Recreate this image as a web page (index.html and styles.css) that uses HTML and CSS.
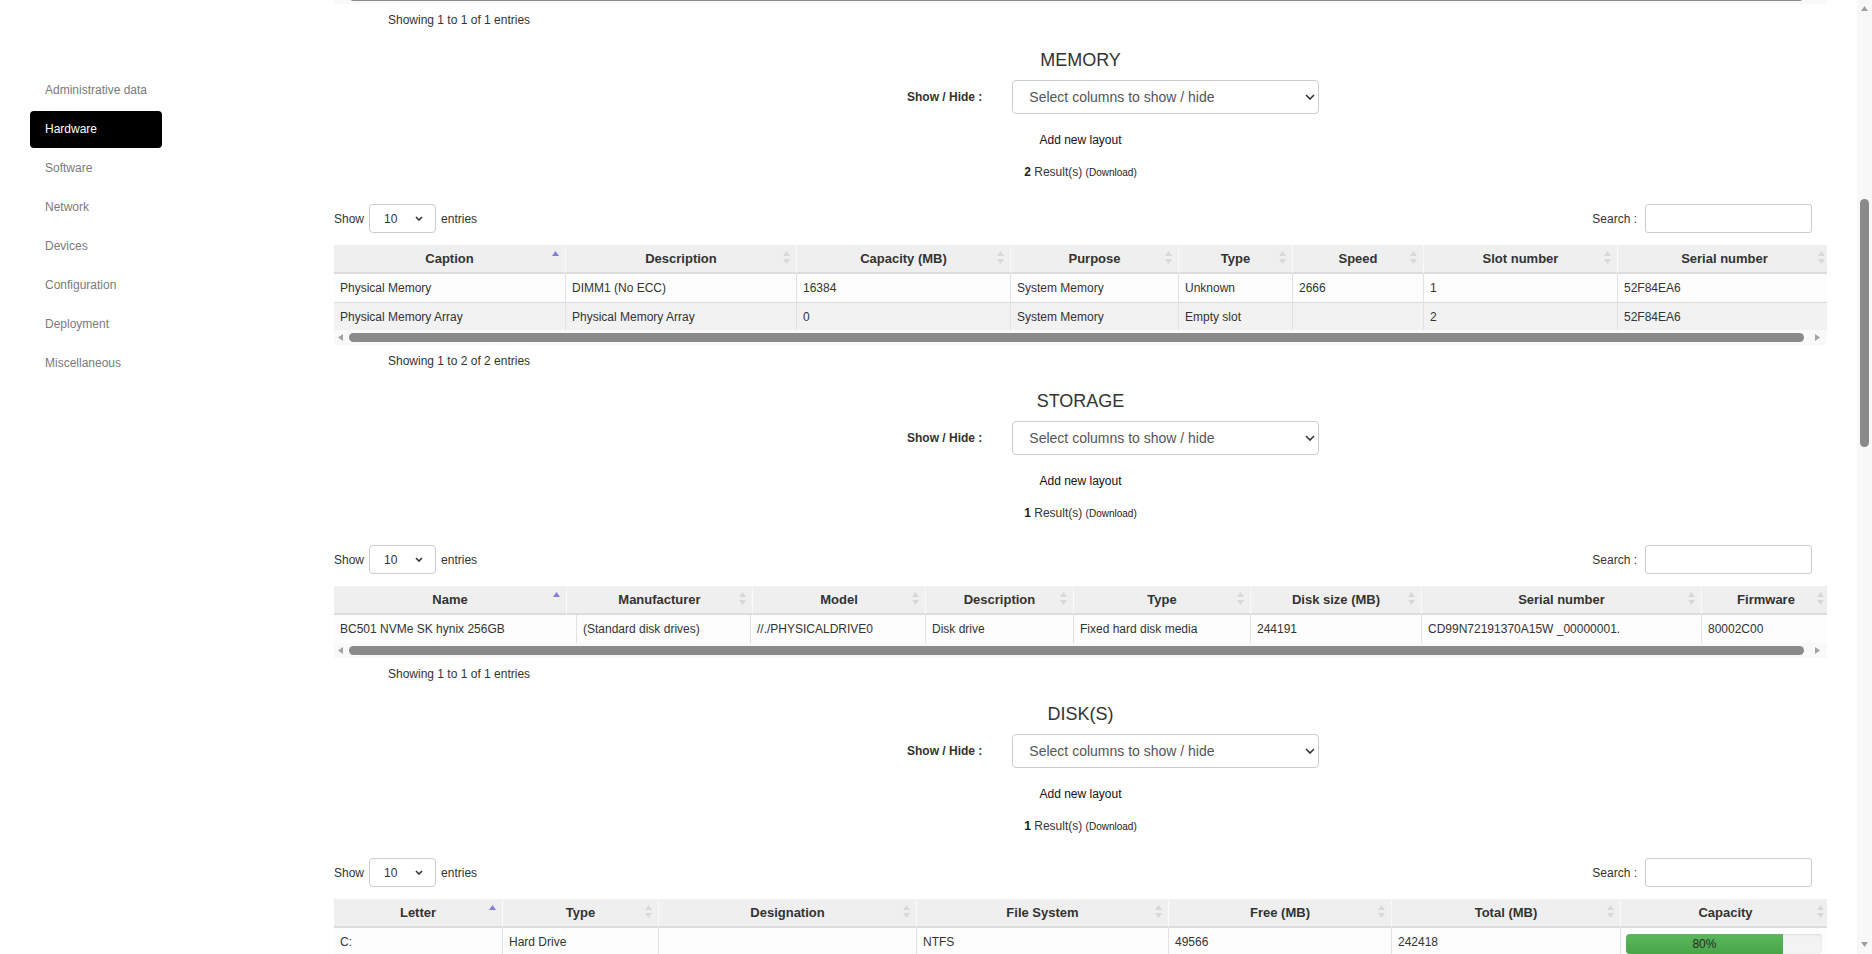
FILE: index.html
```html
<!DOCTYPE html>
<html lang="en">
<head>
<meta charset="utf-8">
<title>Hardware</title>
<link rel="stylesheet" href="styles.css">
</head>
<body>
<div class="page">
  <aside class="sidebar">
    <nav class="nav">
      <a class="nav-item">Administrative data</a>
      <a class="nav-item active">Hardware</a>
      <a class="nav-item">Software</a>
      <a class="nav-item">Network</a>
      <a class="nav-item">Devices</a>
      <a class="nav-item">Configuration</a>
      <a class="nav-item">Deployment</a>
      <a class="nav-item">Miscellaneous</a>
    </nav>
  </aside>

  <main class="main">
    <div class="hscroll top-cut">
      <svg class="arr" width="5" height="7" viewBox="0 0 5 7"><path d="M5 0V7L0 3.5z"/></svg>
      <div class="thumb"></div>
      <svg class="arr" width="5" height="7" viewBox="0 0 5 7"><path d="M0 0V7L5 3.5z"/></svg>
    </div>
    <div class="dt-info">Showing 1 to 1 of 1 entries</div>

    <!-- MEMORY -->
    <section class="block">
      <h2 class="block-title">MEMORY</h2>
      <div class="showhide">
        <label class="sh-label">Show / Hide :</label>
        <div class="select-wrap big">
          <select class="sel-big"><option>Select columns to show / hide</option></select>
          <svg class="chev" width="10" height="6" viewBox="0 0 10 6"><path d="M1 1l4 4 4-4"/></svg>
        </div>
      </div>
      <div class="add-layout">Add new layout</div>
      <div class="results"><b>2</b> Result(s) <span class="dl">(Download)</span></div>
      <div class="dt-top">
        <div class="len">Show
          <div class="select-wrap small">
            <select class="sel-small"><option>10</option></select>
            <svg class="chev" width="8" height="5" viewBox="0 0 8 5"><path d="M1 1l3 3 3-3"/></svg>
          </div>
          entries</div>
        <div class="search">Search : <input class="search-in" type="text"></div>
      </div>
      <div class="dt-scroll">
        <table class="dt mem">
          <colgroup><col><col><col><col><col><col><col><col></colgroup>
          <thead><tr>
            <th>Caption<svg class="sort" width="7" height="13" viewBox="0 0 7 13"><path class="asc" d="M3.5 0L7 5H0z"/></svg></th>
            <th>Description<svg class="sort" width="7" height="13" viewBox="0 0 7 13"><path d="M3.5 0L7 5H0z"/><path d="M0 8h7l-3.5 5z"/></svg></th>
            <th>Capacity (MB)<svg class="sort" width="7" height="13" viewBox="0 0 7 13"><path d="M3.5 0L7 5H0z"/><path d="M0 8h7l-3.5 5z"/></svg></th>
            <th>Purpose<svg class="sort" width="7" height="13" viewBox="0 0 7 13"><path d="M3.5 0L7 5H0z"/><path d="M0 8h7l-3.5 5z"/></svg></th>
            <th>Type<svg class="sort" width="7" height="13" viewBox="0 0 7 13"><path d="M3.5 0L7 5H0z"/><path d="M0 8h7l-3.5 5z"/></svg></th>
            <th>Speed<svg class="sort" width="7" height="13" viewBox="0 0 7 13"><path d="M3.5 0L7 5H0z"/><path d="M0 8h7l-3.5 5z"/></svg></th>
            <th>Slot number<svg class="sort" width="7" height="13" viewBox="0 0 7 13"><path d="M3.5 0L7 5H0z"/><path d="M0 8h7l-3.5 5z"/></svg></th>
            <th>Serial number<svg class="sort" width="7" height="13" viewBox="0 0 7 13"><path d="M3.5 0L7 5H0z"/><path d="M0 8h7l-3.5 5z"/></svg></th>
          </tr></thead>
          <tbody>
            <tr><td>Physical Memory</td><td>DIMM1 (No ECC)</td><td>16384</td><td>System Memory</td><td>Unknown</td><td>2666</td><td>1</td><td>52F84EA6</td></tr>
            <tr><td>Physical Memory Array</td><td>Physical Memory Array</td><td>0</td><td>System Memory</td><td>Empty slot</td><td></td><td>2</td><td>52F84EA6</td></tr>
          </tbody>
        </table>
      </div>
      <div class="hscroll">
        <svg class="arr" width="5" height="7" viewBox="0 0 5 7"><path d="M5 0V7L0 3.5z"/></svg>
        <div class="thumb"></div>
        <svg class="arr" width="5" height="7" viewBox="0 0 5 7"><path d="M0 0V7L5 3.5z"/></svg>
      </div>
      <div class="dt-info">Showing 1 to 2 of 2 entries</div>
    </section>

    <!-- STORAGE -->
    <section class="block">
      <h2 class="block-title">STORAGE</h2>
      <div class="showhide">
        <label class="sh-label">Show / Hide :</label>
        <div class="select-wrap big">
          <select class="sel-big"><option>Select columns to show / hide</option></select>
          <svg class="chev" width="10" height="6" viewBox="0 0 10 6"><path d="M1 1l4 4 4-4"/></svg>
        </div>
      </div>
      <div class="add-layout">Add new layout</div>
      <div class="results"><b>1</b> Result(s) <span class="dl">(Download)</span></div>
      <div class="dt-top">
        <div class="len">Show
          <div class="select-wrap small">
            <select class="sel-small"><option>10</option></select>
            <svg class="chev" width="8" height="5" viewBox="0 0 8 5"><path d="M1 1l3 3 3-3"/></svg>
          </div>
          entries</div>
        <div class="search">Search : <input class="search-in" type="text"></div>
      </div>
      <div class="dt-scroll">
        <table class="dt sto-head">
          <colgroup><col><col><col><col><col><col><col><col></colgroup>
          <thead><tr>
            <th>Name<svg class="sort" width="7" height="13" viewBox="0 0 7 13"><path class="asc" d="M3.5 0L7 5H0z"/></svg></th>
            <th>Manufacturer<svg class="sort" width="7" height="13" viewBox="0 0 7 13"><path d="M3.5 0L7 5H0z"/><path d="M0 8h7l-3.5 5z"/></svg></th>
            <th>Model<svg class="sort" width="7" height="13" viewBox="0 0 7 13"><path d="M3.5 0L7 5H0z"/><path d="M0 8h7l-3.5 5z"/></svg></th>
            <th>Description<svg class="sort" width="7" height="13" viewBox="0 0 7 13"><path d="M3.5 0L7 5H0z"/><path d="M0 8h7l-3.5 5z"/></svg></th>
            <th>Type<svg class="sort" width="7" height="13" viewBox="0 0 7 13"><path d="M3.5 0L7 5H0z"/><path d="M0 8h7l-3.5 5z"/></svg></th>
            <th>Disk size (MB)<svg class="sort" width="7" height="13" viewBox="0 0 7 13"><path d="M3.5 0L7 5H0z"/><path d="M0 8h7l-3.5 5z"/></svg></th>
            <th>Serial number<svg class="sort" width="7" height="13" viewBox="0 0 7 13"><path d="M3.5 0L7 5H0z"/><path d="M0 8h7l-3.5 5z"/></svg></th>
            <th>Firmware<svg class="sort" width="7" height="13" viewBox="0 0 7 13"><path d="M3.5 0L7 5H0z"/><path d="M0 8h7l-3.5 5z"/></svg></th>
          </tr></thead>
        </table>
        <table class="dt sto-body">
          <colgroup><col><col><col><col><col><col><col><col></colgroup>
          <tbody>
            <tr><td>BC501 NVMe SK hynix 256GB</td><td>(Standard disk drives)</td><td>//./PHYSICALDRIVE0</td><td>Disk drive</td><td>Fixed hard disk media</td><td>244191</td><td>CD99N72191370A15W _00000001.</td><td>80002C00</td></tr>
          </tbody>
        </table>
      </div>
      <div class="hscroll">
        <svg class="arr" width="5" height="7" viewBox="0 0 5 7"><path d="M5 0V7L0 3.5z"/></svg>
        <div class="thumb"></div>
        <svg class="arr" width="5" height="7" viewBox="0 0 5 7"><path d="M0 0V7L5 3.5z"/></svg>
      </div>
      <div class="dt-info">Showing 1 to 1 of 1 entries</div>
    </section>

    <!-- DISKS -->
    <section class="block">
      <h2 class="block-title">DISK(S)</h2>
      <div class="showhide">
        <label class="sh-label">Show / Hide :</label>
        <div class="select-wrap big">
          <select class="sel-big"><option>Select columns to show / hide</option></select>
          <svg class="chev" width="10" height="6" viewBox="0 0 10 6"><path d="M1 1l4 4 4-4"/></svg>
        </div>
      </div>
      <div class="add-layout">Add new layout</div>
      <div class="results"><b>1</b> Result(s) <span class="dl">(Download)</span></div>
      <div class="dt-top">
        <div class="len">Show
          <div class="select-wrap small">
            <select class="sel-small"><option>10</option></select>
            <svg class="chev" width="8" height="5" viewBox="0 0 8 5"><path d="M1 1l3 3 3-3"/></svg>
          </div>
          entries</div>
        <div class="search">Search : <input class="search-in" type="text"></div>
      </div>
      <div class="dt-scroll">
        <table class="dt dsk">
          <colgroup><col><col><col><col><col><col><col></colgroup>
          <thead><tr>
            <th>Letter<svg class="sort" width="7" height="13" viewBox="0 0 7 13"><path class="asc" d="M3.5 0L7 5H0z"/></svg></th>
            <th>Type<svg class="sort" width="7" height="13" viewBox="0 0 7 13"><path d="M3.5 0L7 5H0z"/><path d="M0 8h7l-3.5 5z"/></svg></th>
            <th>Designation<svg class="sort" width="7" height="13" viewBox="0 0 7 13"><path d="M3.5 0L7 5H0z"/><path d="M0 8h7l-3.5 5z"/></svg></th>
            <th>File System<svg class="sort" width="7" height="13" viewBox="0 0 7 13"><path d="M3.5 0L7 5H0z"/><path d="M0 8h7l-3.5 5z"/></svg></th>
            <th>Free (MB)<svg class="sort" width="7" height="13" viewBox="0 0 7 13"><path d="M3.5 0L7 5H0z"/><path d="M0 8h7l-3.5 5z"/></svg></th>
            <th>Total (MB)<svg class="sort" width="7" height="13" viewBox="0 0 7 13"><path d="M3.5 0L7 5H0z"/><path d="M0 8h7l-3.5 5z"/></svg></th>
            <th>Capacity<svg class="sort" width="7" height="13" viewBox="0 0 7 13"><path d="M3.5 0L7 5H0z"/><path d="M0 8h7l-3.5 5z"/></svg></th>
          </tr></thead>
          <tbody>
            <tr><td>C:</td><td>Hard Drive</td><td></td><td>NTFS</td><td>49566</td><td>242418</td>
              <td class="cap-cell"><div class="progress"><div class="progress-bar" style="width:80%">80%</div></div></td></tr>
          </tbody>
        </table>
      </div>
    </section>
  </main>

  <div class="vscroll">
    <svg class="varr" width="7" height="5" viewBox="0 0 7 5"><path d="M3.5 0L7 5H0z"/></svg>
    <div class="vtrack"><div class="vthumb"></div></div>
    <svg class="varr" width="7" height="5" viewBox="0 0 7 5"><path d="M0 0h7L3.5 5z"/></svg>
  </div>
</div>
</body>
</html>
```

FILE: styles.css
```css
* { box-sizing: border-box; }
html, body { margin: 0; padding: 0; }
body {
  font-family: "Liberation Sans", Arial, Helvetica, sans-serif;
  font-size: 12px;
  color: #333;
  background: #fff;
}
.page {
  display: flex;
  height: 954px;
  overflow: hidden;
}

/* Sidebar */
.sidebar {
  flex: none;
  width: 334px;
  padding: 72px 0 0 30px;
}
.nav { display: flex; flex-direction: column; gap: 2px; }
.nav-item {
  display: block;
  width: 132px;
  height: 37px;
  line-height: 37px;
  padding-left: 15px;
  border-radius: 4px;
  color: #7a7a7a;
  font-size: 12px;
  text-decoration: none;
}
.nav-item.active { background: #000; color: #fff; }

/* Main */
.main {
  flex: none;
  width: 1493px;
  margin-right: 30px;
}
.hscroll {
  height: 15px;
  display: flex;
  align-items: center;
  background: #f9f9f9;
}
.hscroll.top-cut { margin-top: -11px; }
.hscroll .arr { flex: none; fill: #a3a3a3; }
.hscroll .arr:first-child { margin-left: 4px; }
.hscroll .arr:last-child { margin-right: 7px; }
.hscroll .thumb {
  flex: 1;
  height: 9px;
  margin: 0 11px 0 6px;
  border-radius: 5px;
  background: #8a8a8a;
}
.dt-info {
  height: 32px;
  line-height: 32px;
  padding-left: 54px;
  font-size: 12px;
  color: #333;
}

.block-title {
  margin: 0;
  padding-top: 14px;
  height: 34px;
  line-height: 20px;
  font-size: 18px;
  font-weight: normal;
  text-align: center;
  color: #333;
}
.showhide {
  display: flex;
  align-items: center;
  gap: 30px;
  margin-top: 10px;
  padding-left: 573px;
  height: 34px;
}
.sh-label { font-weight: bold; font-size: 12px; color: #333; }
.select-wrap { position: relative; }
.select-wrap select {
  -webkit-appearance: none;
  appearance: none;
  display: block;
  background: #fff;
  border: 1px solid #ccc;
  border-radius: 4px;
  font-family: inherit;
  outline: none;
}
.sel-big {
  width: 307px;
  height: 34px;
  padding: 0 16px;
  font-size: 14px;
  color: #555;
}
.select-wrap .chev {
  position: absolute;
  fill: none;
  stroke: #333;
  stroke-width: 1.6;
}
.select-wrap.big .chev { right: 4px; top: 14px; }
.sel-small {
  width: 67px;
  height: 29px;
  padding: 0 14px;
  font-size: 12px;
  color: #333;
}
.select-wrap.small .chev { right: 13px; top: 12px; }

.add-layout {
  margin-top: 19px;
  line-height: 14px;
  text-align: center;
  color: #111;
  font-size: 12px;
}
.results {
  margin-top: 18px;
  line-height: 14px;
  text-align: center;
  font-size: 12px;
  color: #333;
}
.results b { color: #222; }
.results .dl { font-size: 10px; color: #222; }

.dt-top {
  display: flex;
  justify-content: space-between;
  align-items: center;
  margin-top: 24px;
  height: 29px;
  padding-right: 15px;
}
.len, .search {
  display: flex;
  align-items: center;
  gap: 5px;
  font-size: 12px;
  color: #333;
}
.search { gap: 8px; }
.search-in {
  width: 167px;
  height: 29px;
  border: 1px solid #ccc;
  border-radius: 3px;
  outline: none;
  background: #fff;
}

.dt-scroll {
  margin-top: 12px;
  width: 1493px;
  overflow: hidden;
}
table.dt {
  border-collapse: separate;
  border-spacing: 0;
  table-layout: fixed;
  width: 1497px;
}
.dt th {
  position: relative;
  height: 29px;
  padding: 0 18px;
  background: #efefef;
  border-bottom: 2px solid #dcdcdc;
  border-right: 1px solid #f9f9f9;
  font-size: 13px;
  font-weight: bold;
  color: #333;
  text-align: center;
  white-space: nowrap;
}
.dt th .sort {
  position: absolute;
  right: 6px;
  top: 6px;
  fill: #d8d8d8;
}
.dt th .sort .asc { fill: #7f7fdc; }
.dt td {
  height: 28px;
  padding: 0 6px;
  font-size: 12px;
  color: #333;
  border-right: 1px solid #e2e2e2;
  white-space: nowrap;
  overflow: hidden;
  background: #fdfdfd;
}
.dt tbody tr + tr td { border-top: 1px solid #dcdcdc; }
.dt tbody tr:nth-child(even) td { background: #f2f2f2; }

.mem col:nth-child(1) { width: 232px; }
.mem col:nth-child(2) { width: 231px; }
.mem col:nth-child(3) { width: 214px; }
.mem col:nth-child(4) { width: 168px; }
.mem col:nth-child(5) { width: 114px; }
.mem col:nth-child(6) { width: 131px; }
.mem col:nth-child(7) { width: 194px; }
.mem col:nth-child(8) { width: 214px; }

.sto-head col:nth-child(1) { width: 233px; }
.sto-head col:nth-child(2) { width: 186px; }
.sto-head col:nth-child(3) { width: 173px; }
.sto-head col:nth-child(4) { width: 148px; }
.sto-head col:nth-child(5) { width: 177px; }
.sto-head col:nth-child(6) { width: 171px; }
.sto-head col:nth-child(7) { width: 280px; }
.sto-head col:nth-child(8) { width: 129px; }

.sto-body col:nth-child(1) { width: 243px; }
.sto-body col:nth-child(2) { width: 174px; }
.sto-body col:nth-child(3) { width: 175px; }
.sto-body col:nth-child(4) { width: 148px; }
.sto-body col:nth-child(5) { width: 177px; }
.sto-body col:nth-child(6) { width: 171px; }
.sto-body col:nth-child(7) { width: 280px; }
.sto-body col:nth-child(8) { width: 129px; }

.dsk col:nth-child(1) { width: 169px; }
.dsk col:nth-child(2) { width: 156px; }
.dsk col:nth-child(3) { width: 258px; }
.dsk col:nth-child(4) { width: 252px; }
.dsk col:nth-child(5) { width: 223px; }
.dsk col:nth-child(6) { width: 229px; }
.dsk col:nth-child(7) { width: 210px; }

.dt td.cap-cell { padding: 6px 5px 0; vertical-align: top; }
.progress {
  height: 20px;
  width: 196px;
  border-radius: 4px;
  background: #f3f3f3;
  box-shadow: inset 0 1px 2px rgba(0,0,0,0.1);
  overflow: hidden;
}
.progress-bar {
  height: 20px;
  line-height: 20px;
  text-align: center;
  font-size: 12px;
  color: #2a2a2a;
  background: linear-gradient(#5cb85c, #47a447);
}

/* page scrollbar */
.vscroll {
  flex: none;
  width: 15px;
  height: 954px;
  background: #f8f8f8;
  display: flex;
  flex-direction: column;
  align-items: center;
  padding: 6px 0 7px;
}
.varr { flex: none; fill: #a0a0a0; }
.vtrack { flex: 1; width: 100%; padding-top: 188px; }
.vthumb {
  width: 9px;
  height: 248px;
  margin-left: 3px;
  border-radius: 5px;
  background: #8a8a8a;
}
```
